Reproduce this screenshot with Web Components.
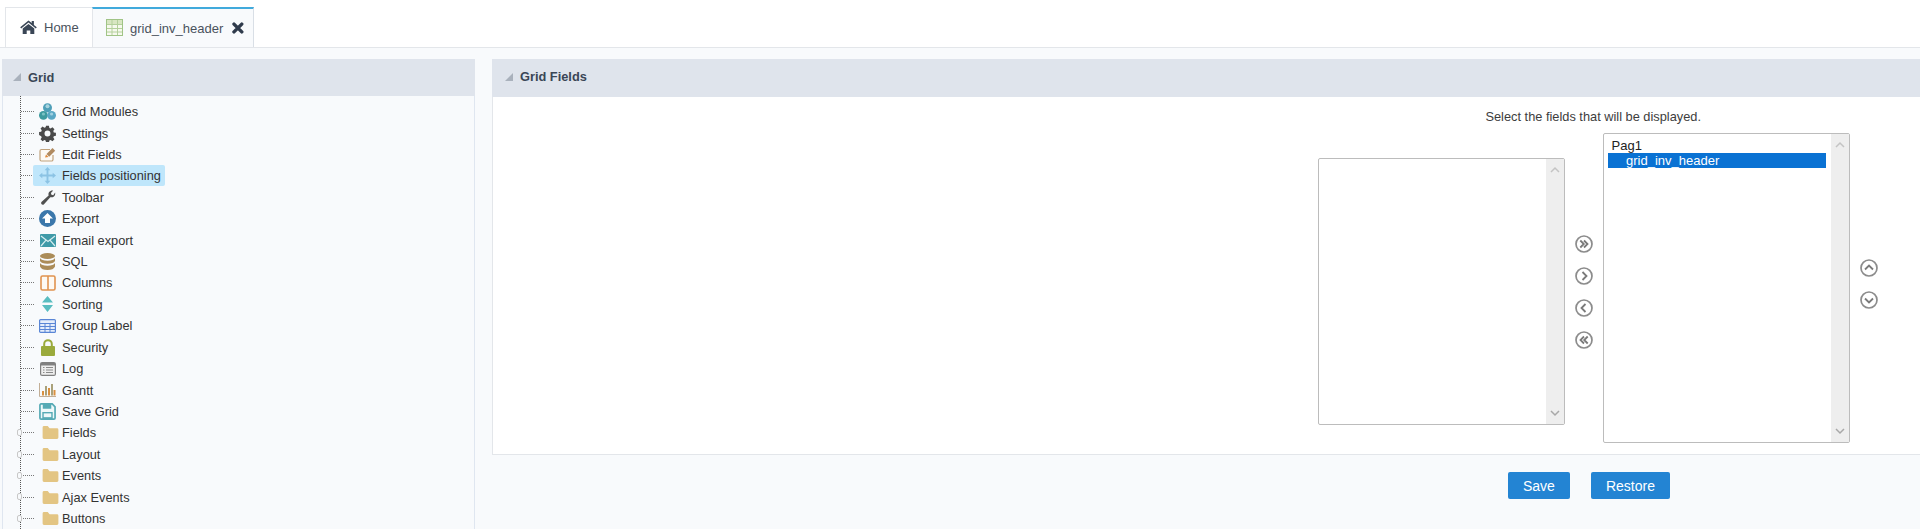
<!DOCTYPE html>
<html>
<head>
<meta charset="utf-8">
<title>grid_inv_header</title>
<style>
  html, body { margin: 0; height: 529px; overflow: hidden; background: #f8fafc; }
  body { font-family: "Liberation Sans", Arial, sans-serif; font-size: 13px; color: #333; }
</style>
</head>
<body>
<app-shell>
  <tab-bar slot="tabs">
    <tab-item icon="home">Home</tab-item>
    <tab-item icon="grid" active closable>grid_inv_header</tab-item>
  </tab-bar>
  <side-panel slot="side" title="Grid">
    <tree-row icon="modules">Grid Modules</tree-row>
    <tree-row icon="gear">Settings</tree-row>
    <tree-row icon="edit">Edit Fields</tree-row>
    <tree-row icon="move" selected>Fields positioning</tree-row>
    <tree-row icon="wrench">Toolbar</tree-row>
    <tree-row icon="export">Export</tree-row>
    <tree-row icon="mail">Email export</tree-row>
    <tree-row icon="sql">SQL</tree-row>
    <tree-row icon="columns">Columns</tree-row>
    <tree-row icon="sorting">Sorting</tree-row>
    <tree-row icon="table">Group Label</tree-row>
    <tree-row icon="lock">Security</tree-row>
    <tree-row icon="log">Log</tree-row>
    <tree-row icon="gantt">Gantt</tree-row>
    <tree-row icon="save">Save Grid</tree-row>
    <tree-row icon="folder" branch>Fields</tree-row>
    <tree-row icon="folder" branch>Layout</tree-row>
    <tree-row icon="folder" branch>Events</tree-row>
    <tree-row icon="folder" branch>Ajax Events</tree-row>
    <tree-row icon="folder" branch>Buttons</tree-row>
  </side-panel>
  <fields-panel slot="main" title="Grid Fields">
    <span slot="hint">Select the fields that will be displayed.</span>
    <list-box slot="source" style="margin-top:25px;height:267px"></list-box>
    <round-btn slot="move" dir="all-right"></round-btn>
    <round-btn slot="move" dir="right"></round-btn>
    <round-btn slot="move" dir="left"></round-btn>
    <round-btn slot="move" dir="all-left"></round-btn>
    <list-box slot="target" style="height:310px">
      <div>Pag1</div>
      <div class="sel">grid_inv_header</div>
    </list-box>
    <round-btn slot="order" dir="up"></round-btn>
    <round-btn slot="order" dir="down"></round-btn>
    <action-btn slot="actions">Save</action-btn>
    <action-btn slot="actions">Restore</action-btn>
  </fields-panel>
</app-shell>

<script>
// Icons keyed by the icon attribute of tab-item and tree-row
const ICONS = {
  home: '<svg width="17" height="14" viewBox="0 0 17 14"><path fill="#3a4656" d="M8.500 0.600 0.200 7.300l1 1.100 7.300-5.900 7.300 5.900 1-1.100-2.900-2.400V1h-2.200v2L8.500.6zM2.700 8.600V14h4v-3.600h3.600V14h4V8.600L8.500 3.900z"/></svg>',
  grid: '<svg width="17" height="17" viewBox="0 0 17 17"><rect width="16" height="16" x=".5" y=".5" fill="#f6f9ee" stroke="#a0c486"/><rect x="1" y="1" width="15" height="4" fill="#d8e6c2"/><path fill="none" stroke="#b4d09c" d="M6 1v15M11.500 1v15M1 5.500h15M1 9.500h15M1 13h15"/></svg>',
  modules: '<svg width="17" height="17" viewBox="0 0 17 17"><circle cx="8.500" cy="4.700" r="4.500" fill="#4f9fb8"/><circle cx="4.400" cy="12.300" r="4.400" fill="#3d9a9e"/><circle cx="12.600" cy="12.300" r="4.400" fill="#5aa7c4"/><circle cx="8.500" cy="3.300" r="2" fill="#a8d3de"/><circle cx="4.400" cy="11" r="1.600" fill="#7cc2c4"/><circle cx="12.600" cy="11" r="1.600" fill="#a0d0e0"/></svg>',
  gear: '<svg width="17" height="17" viewBox="0 0 18 18"><path fill="#4a4a4a" fill-rule="evenodd" d="M7.300 0h3.400l.5 2.500 1.500.6 2.100-1.400 2.400 2.400-1.400 2.100.6 1.500 2.500.5v3.400l-2.500.5-.6 1.500 1.400 2.100-2.400 2.400-2.100-1.400-1.500.6-.5 2.500H7.300l-.5-2.500-1.500-.6-2.100 1.400-2.400-2.400 1.400-2.100-.6-1.500L-.9 10.700V7.300l2.500-.5.6-1.500-1.400-2.100 2.400-2.400 2.100 1.400 1.500-.6zM9 5.500a3.500 3.500 0 1 0 0 7 3.500 3.500 0 0 0 0-7z" transform="translate(.9 .9) scale(.9)"/></svg>',
  edit: '<svg width="17" height="15" viewBox="0 0 17 14"><path fill="#fdfaf5" stroke="#c0a27c" stroke-width="1.200" d="M14 7.500v4.500a1.500 1.500 0 0 1-1.500 1.500h-10A1.500 1.500 0 0 1 1 12V3.500A1.500 1.500 0 0 1 2.500 2H11"/><path fill="#e08a3a" d="M6 10l1-3 2.500 2.500z"/><path fill="#b08a60" d="M7.500 6.500 13.500.5l2.700 2.700-6 6z"/></svg>',
  move: '<svg width="17" height="17" viewBox="0 0 18 18"><path fill="#8cc3e4" d="M9 0l3 3.500H10V8h4.500V6l3.500 3-3.500 3v-2H10v4.500h2L9 18l-3-3.500h2V10H3.500v2L0 9l3.500-3v2H8V3.500H6z"/></svg>',
  wrench: '<svg width="16" height="17" viewBox="0 0 18 18"><path fill="#505050" d="M17 3.500c.5 2-.3 3.800-1.700 4.700-1.100.7-2.500.8-3.700.4L4.500 16.500c-.8.8-2 .8-2.700.1-.8-.8-.7-1.900.1-2.700l7.800-7.200c-.4-1.300-.2-2.700.6-3.800C11.300 1.500 13 .8 14.900 1.200l-2.600 2.700.6 2 2 .5z"/></svg>',
  export: '<svg width="17" height="17" viewBox="0 0 17 17"><circle cx="8.500" cy="8.500" r="8.500" fill="#3b77ab"/><path fill="#fff" d="M8.500 3 14 8.500h-3V13H6V8.500H3z"/></svg>',
  mail: '<svg width="16" height="13" viewBox="0 0 16 13"><rect width="16" height="13" rx="1" fill="#3f9aa8"/><path fill="none" stroke="#d8eef0" stroke-width="1.200" d="M1 2l7 5.500L15 2M1 12l5-5.800M15 12l-5-5.800"/></svg>',
  sql: '<svg width="15" height="17" viewBox="0 0 15 17"><g fill="#ab8c58"><ellipse cx="7.500" cy="3" rx="7.500" ry="3"/><path d="M0 5c1 2 3.500 2.700 7.500 2.700S14 7 15 5v3c-1 2-3.500 2.700-7.500 2.700S1 10 0 8z"/><path d="M0 10c1 2 3.500 2.700 7.500 2.700S14 12 15 10v3.500c-1 2.500-3.500 3.500-7.500 3.500S1 16 0 13.500z"/></g></svg>',
  columns: '<svg width="16" height="16" viewBox="0 0 16 16"><rect x="1" y="1" width="14" height="14" rx="1.500" fill="#fdf9f3" stroke="#e0934f" stroke-width="1.600"/><path stroke="#e0934f" stroke-width="1.600" d="M8 1v14"/></svg>',
  sorting: '<svg width="11" height="16" viewBox="0 0 11 16"><path fill="#59bdc0" d="M5.500 0l5.500 6.500H0zM0 9h11l-5.500 7z"/></svg>',
  table: '<svg width="17" height="14" viewBox="0 0 17 14"><rect x=".6" y=".6" width="15.800" height="12.800" rx="1" fill="#e6eefb" stroke="#5a86d6" stroke-width="1.200"/><path fill="none" stroke="#5a86d6" d="M.6 4.500h15.800M.6 7.500h15.800M.6 10.500h15.800M6 4.500v9M11 4.500v9"/></svg>',
  lock: '<svg width="14" height="17" viewBox="0 0 14 17"><path fill="none" stroke="#9aaa3c" stroke-width="2" d="M3.200 8V5a3.800 3.800 0 0 1 7.600 0v3"/><rect y="7" width="14" height="10" rx="1" fill="#9aaa3c"/></svg>',
  log: '<svg width="16" height="14" viewBox="0 0 16 14"><rect x=".6" y=".6" width="14.800" height="12.800" rx="1.500" fill="#eee" stroke="#808080" stroke-width="1.200"/><rect x="1" y="1" width="14" height="2.500" fill="#808080"/><path stroke="#8a8a8a" d="M3 5.500h1.500M6 5.500h7M3 8h1.500M6 8h7M3 10.500h1.500M6 10.500h7"/></svg>',
  gantt: '<svg width="17" height="14" viewBox="0 0 17 14"><path fill="none" stroke="#c2ae96" d="M.5 0v13.500H17"/><path fill="#d9903f" d="M3 8h2v4.500H3zM9 5h2v7.500H9zM14.500 7h2v5.500h-2z"/><path fill="#a9a17a" d="M6 3h2v9.500H6zM12 1h2v11.500h-2z"/></svg>',
  save: '<svg width="17" height="17" viewBox="0 0 18 18"><path fill="#eef8f9" stroke="#55aab5" stroke-width="1.800" d="M1 2.200A1.200 1.200 0 0 1 2.200 1H14l3 3v11.800a1.200 1.200 0 0 1-1.200 1.200H2.200A1.200 1.200 0 0 1 1 15.800z"/><path fill="#55aab5" d="M4 1h9v5H4zM3.500 9.500h11V17h-11z"/><path fill="#eef8f9" d="M5 11h8v4H5z"/></svg>',
  folder: '<svg width="17" height="13" viewBox="0 0 17 14" style="margin-left:5px"><path fill="#e3c583" d="M0 1.500A1.500 1.500 0 0 1 1.500 0h4L7.500 2.500H15.500A1.500 1.500 0 0 1 17 4v8.500a1.500 1.500 0 0 1-1.500 1.500h-14A1.500 1.500 0 0 1 0 12.500z"/></svg>'
};

const ARROWS = {
  'all-right': 'M5.300 5.500 8.800 9l-3.500 3.500M9 5.500 12.500 9 9 12.500',
  'right': 'M7.500 5 11.500 9l-4 4',
  'left': 'M10.500 5 6.500 9l4 4',
  'all-left': 'M12.700 5.500 9.200 9l3.500 3.500M9 5.500 5.500 9 9 12.500',
  'up': 'M5 10.500 9 6.500l4 4',
  'down': 'M5 7.500 9 11.500l4-4'
};

class AppShell extends HTMLElement {
  constructor() {
    super();
    this.attachShadow( {mode: 'open'} ).innerHTML = `
      <style>
        :host { display: flex; flex-direction: column; width: 1920px; }
        main { display: flex; gap: 17px; padding: 11px 0 0 2px; }
      </style>
      <slot name="tabs"></slot>
      <main>
        <slot name="side"></slot>
        <slot name="main"></slot>
      </main>
    `;
  }
}

class TabBar extends HTMLElement {
  constructor() {
    super();
    this.attachShadow( {mode: 'open'} ).innerHTML = `
      <style>
        :host {
          background: #fff;
          border-bottom: 1px solid #e3e6ea;
          box-sizing: border-box;
          display: flex;
          height: 48px;
          padding: 7px 0 0 5px;
        }
      </style>
      <slot></slot>
    `;
  }
}

class TabItem extends HTMLElement {
  constructor() {
    super();
    const active = this.hasAttribute( 'active' );
    this.attachShadow( {mode: 'open'} ).innerHTML = `
      <style>
        :host {
          align-items: center;
          background: ${active ? '#f8fafc' : '#fff'};
          border-left: 1px solid #e3e6ea;
          border-right: ${active ? '1px solid #d9dfe6' : '0'};
          border-top: ${active ? '2px solid #41aadc' : '1px solid #e3e6ea'};
          box-sizing: border-box;
          color: #4a525c;
          display: flex;
          gap: ${active ? '7px' : '7px'};
          height: 40px;
          margin-bottom: -1px;
          padding: ${active ? '0 9px 0 13px' : '0 13px 0 14px'};
          width: ${active ? '162px' : '87px'};
        }
        svg { display: block; }
        .icon { margin-top: -2px; }
        .close { margin-left: 2px; }
      </style>
      <span class="icon">${ICONS[this.getAttribute( 'icon' )]}</span>
      <slot></slot>
      ${this.hasAttribute( 'closable' ) ? `<svg class="close" width="12" height="12" viewBox="0 0 13 13"><path fill="none" stroke="#2f3b4c" stroke-width="3.800" stroke-linecap="round" d="M2.200 2.200l8.600 8.600M10.800 2.200l-8.600 8.600"/></svg>` : ''}
    `;
  }
}

class SidePanel extends HTMLElement {
  constructor() {
    super();
    this.attachShadow( {mode: 'open'} ).innerHTML = `
      <style>
        :host {
          background: #f8fafc;
          border-left: 1px solid #dfe6f0;
          border-right: 1px solid #dfe6f0;
          box-sizing: border-box;
          display: block;
          flex: none;
          height: 480px;
          width: 473px;
        }
        header {
          align-items: center;
          background: #dfe4ec;
          box-sizing: border-box;
          color: #3a4656;
          display: flex;
          font-size: 12.800px;
          font-weight: bold;
          gap: 7px;
          height: 37px;
          margin-left: -1px;
          margin-right: -1px;
          padding: 0 0 1px 11px;
        }
        i { border-color: transparent transparent #a9b1bc transparent; border-style: solid; border-width: 0 0 8px 8px; }
        .tree { padding-top: 4.900px; position: relative; }
        .line { border-left: 1px dotted #555; bottom: 0; left: 17px; position: absolute; top: 0; }
      </style>
      <header><i></i>${this.getAttribute( 'title' )}</header>
      <div class="tree"><div class="line"></div><slot></slot></div>
    `;
  }
}

class TreeRow extends HTMLElement {
  constructor() {
    super();
    const selected = this.hasAttribute( 'selected' );
    this.attachShadow( {mode: 'open'} ).innerHTML = `
      <style>
        :host {
          align-items: center;
          color: #333;
          display: flex;
          font-size: 12.800px;
          height: 21.430px;
          position: relative;
        }
        .dash { border-top: 1px dotted #777; flex: none; margin-left: 18px; width: 13px; }
        .box {
          background: #f8fafc;
          border: 1px solid #c8c8c8;
          border-radius: 2px;
          height: 5px;
          left: 14px;
          position: absolute;
          top: 7px;
          width: 3px;
        }
        .label {
          align-items: center;
          background: ${selected ? '#bfe6fb' : 'transparent'};
          border-radius: 2px;
          display: flex;
          height: 21px;
          margin-left: -1px;
          padding-right: 4px;
        }
        .icon { align-items: center; display: flex; justify-content: center; width: 29px; }
        svg { display: block; flex: none; }
      </style>
      <div class="dash"></div>
      ${this.hasAttribute( 'branch' ) ? '<div class="box"></div>' : ''}
      <div class="label">
        <span class="icon">${ICONS[this.getAttribute( 'icon' )]}</span>
        <span><slot></slot></span>
      </div>
    `;
  }
}

class FieldsPanel extends HTMLElement {
  constructor() {
    super();
    this.attachShadow( {mode: 'open'} ).innerHTML = `
      <style>
        :host { display: block; flex: none; width: 1428px; }
        header {
          align-items: center;
          background: #dfe4ec;
          box-sizing: border-box;
          color: #3a4656;
          display: flex;
          font-size: 12.800px;
          font-weight: bold;
          gap: 7px;
          height: 38px;
          padding: 0 0 3px 13px;
        }
        i { border-color: transparent transparent #a9b1bc transparent; border-style: solid; border-width: 0 0 8px 8px; }
        .body {
          background: #fff;
          border-bottom: 1px solid #e3e6ea;
          border-left: 1px solid #e3e6ea;
          box-sizing: border-box;
          display: flex;
          flex-direction: column;
          height: 358px;
          padding: 12px 42px 0 0;
        }
        .picker { display: flex; flex-direction: column; margin-left: auto; width: 560px; }
        .hint { color: #3d3d3d; font-size: 12.800px; line-height: 15px; margin: 0 177px 9px 0; text-align: right; }
        .row { display: flex; }
        .col { align-self: flex-start; display: flex; flex-direction: column; gap: 14px; }
        .move { margin: 102px 10px 0 10px; }
        .order { margin: 126px 0 0 10px; }
        .actions { display: flex; gap: 21px; margin-left: 1016px; padding-top: 17px; }
      </style>
      <header><i></i>${this.getAttribute( 'title' )}</header>
      <div class="body">
        <div class="picker">
          <div class="hint"><slot name="hint"></slot></div>
          <div class="row">
            <slot name="source"></slot>
            <div class="col move"><slot name="move"></slot></div>
            <slot name="target"></slot>
            <div class="col order"><slot name="order"></slot></div>
          </div>
        </div>
      </div>
      <div class="actions"><slot name="actions"></slot></div>
    `;
  }
}

class ListBox extends HTMLElement {
  constructor() {
    super();
    this.attachShadow( {mode: 'open'} ).innerHTML = `
      <style>
        :host {
          background: #fff;
          border: 1px solid #bcbcbc;
          border-radius: 2px;
          box-sizing: border-box;
          color: #222;
          display: flex;
          flex: none;
          width: 247px;
        }
        .items { flex: 1; line-height: 15px; padding: 4px 5px 0 4px; }
        ::slotted( div ) { padding-left: 3.500px; }
        ::slotted( .sel ) { background: #0a72d3; color: #fff; padding-left: 18px; }
        .bar {
          align-items: center;
          background: #eee;
          display: flex;
          flex-direction: column;
          justify-content: space-between;
          padding: 6px 0;
          width: 18px;
        }
        svg { display: block; }
      </style>
      <div class="items"><slot></slot></div>
      <div class="bar">
        <svg width="10" height="10" viewBox="0 0 10 10"><path fill="none" stroke="#c4c4c4" stroke-width="1.500" d="M1 7l4-4 4 4"/></svg>
        <svg width="10" height="10" viewBox="0 0 10 10"><path fill="none" stroke="#a8a8a8" stroke-width="1.500" d="M1 3l4 4 4-4"/></svg>
      </div>
    `;
  }
}

class RoundBtn extends HTMLElement {
  constructor() {
    super();
    this.attachShadow( {mode: 'open'} ).innerHTML = `
      <style>
        :host { display: block; height: 18px; width: 18px; }
        svg { display: block; }
      </style>
      <svg width="18" height="18" viewBox="0 0 18 18">
        <circle cx="9" cy="9" r="8" fill="#fff" stroke="#8c8c8c" stroke-width="1.700"/>
        <path fill="none" stroke="#7a7a7a" stroke-width="1.800" d="${ARROWS[this.getAttribute( 'dir' )]}"/>
      </svg>
    `;
  }
}

class ActionBtn extends HTMLElement {
  constructor() {
    super();
    this.attachShadow( {mode: 'open'} ).innerHTML = `
      <style>
        :host {
          align-items: center;
          background: #2384d3;
          border-radius: 2px;
          color: #fff;
          display: flex;
          font-size: 14px;
          height: 27px;
          justify-content: center;
          padding: 0 15px;
        }
      </style>
      <slot></slot>
    `;
  }
}

window.customElements.define( 'app-shell', AppShell );
window.customElements.define( 'tab-bar', TabBar );
window.customElements.define( 'tab-item', TabItem );
window.customElements.define( 'side-panel', SidePanel );
window.customElements.define( 'tree-row', TreeRow );
window.customElements.define( 'fields-panel', FieldsPanel );
window.customElements.define( 'list-box', ListBox );
window.customElements.define( 'round-btn', RoundBtn );
window.customElements.define( 'action-btn', ActionBtn );
</script>
</body>
</html>
